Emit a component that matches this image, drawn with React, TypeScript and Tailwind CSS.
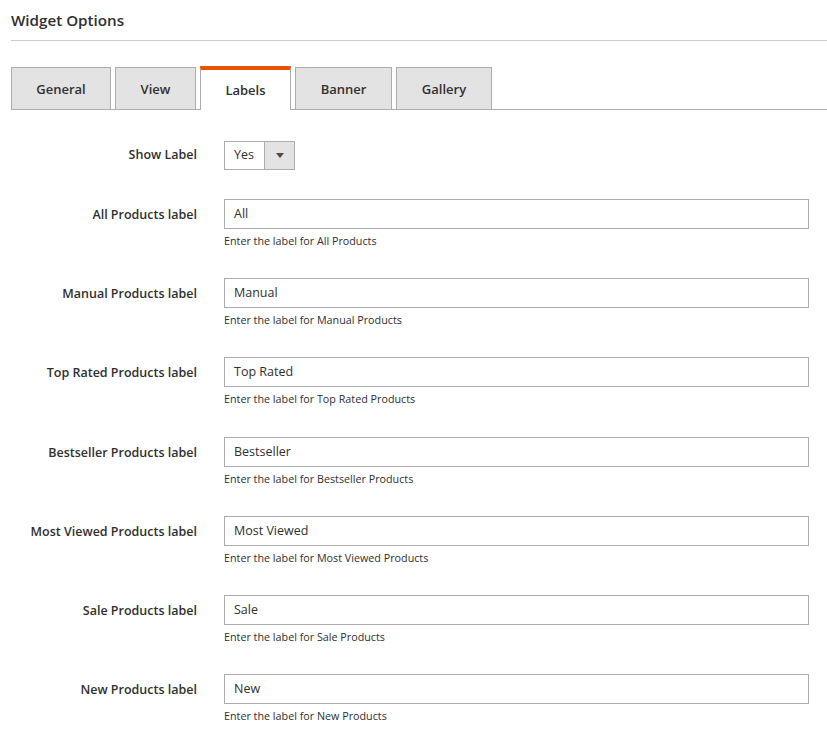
import React from 'react';

const font = { fontFamily: '"Open Sans", "Liberation Sans", sans-serif' };

const tabs = [
  { name: 'General', w: 'w-[100px]' },
  { name: 'View', w: 'w-[81px]' },
  { name: 'Labels', w: 'w-[91px]', active: true },
  { name: 'Banner', w: 'w-[97px]' },
  { name: 'Gallery', w: 'w-[96px]' },
];

const fields = [
  { label: 'All Products label', value: 'All', note: 'Enter the label for All Products' },
  { label: 'Manual Products label', value: 'Manual', note: 'Enter the label for Manual Products' },
  { label: 'Top Rated Products label', value: 'Top Rated', note: 'Enter the label for Top Rated Products' },
  { label: 'Bestseller Products label', value: 'Bestseller', note: 'Enter the label for Bestseller Products' },
  { label: 'Most Viewed Products label', value: 'Most Viewed', note: 'Enter the label for Most Viewed Products' },
  { label: 'Sale Products label', value: 'Sale', note: 'Enter the label for Sale Products' },
  { label: 'New Products label', value: 'New', note: 'Enter the label for New Products' },
];

const Tabs = () => (
  <div className="flex items-end gap-[4px] border-b border-[#adadad] mt-[25px]">
    {tabs.map((t) =>
      t.active ? (
        <div
          key={t.name}
          className={`${t.w} h-[44px] -mb-px pt-[1px] bg-white border-x border-[#adadad] border-t-[4px] border-t-[#eb5202] flex items-center justify-center text-[13px] font-semibold text-[#303030]`}
        >
          {t.name}
        </div>
      ) : (
        <div
          key={t.name}
          className={`${t.w} h-[42px] pt-[2px] bg-[#e3e3e3] border-x border-t border-[#adadad] flex items-center justify-center text-[13px] font-semibold text-[#303030]`}
        >
          {t.name}
        </div>
      ),
    )}
  </div>
);

export default function App() {
  return (
    <div className="min-h-screen bg-white pl-[11px] text-[#303030]" style={font}>
      <div className="pt-[10px] pb-[10px] border-b border-[#cccccc]">
        <h2 className="text-[15.2px] font-semibold leading-[20px]">Widget Options</h2>
      </div>
      <Tabs />

      <div className="pr-[18px]">
        <div className="flex items-center h-[30px] mt-[30px]">
          <div className="w-[186px] pt-[1px] text-right text-[12.5px] font-semibold">Show Label</div>
          <div className="ml-[27px] flex h-[29px] w-[71px] border border-[#adadad]">
            <div className="flex-1 pl-[9px] text-[12.5px] leading-[26px]">Yes</div>
            <div className="w-[30px] border-l border-[#adadad] bg-[#e3e3e3] flex items-center justify-center">
              <svg width="8" height="5" viewBox="0 0 8 5">
                <path d="M0 0 L8 0 L4 5 Z" fill="#514943" />
              </svg>
            </div>
          </div>
        </div>

        {fields.map((f, i) => (
          <div key={f.label} className={`flex items-start ${i === 0 ? 'mt-[29px]' : 'mt-[29.2px]'}`}>
            <div className="w-[186px] text-right text-[12.5px] font-semibold leading-[32px]">{f.label}</div>
            <div className="ml-[27px] flex-1">
              <div className="h-[30px] border border-[#adadad] pl-[9px] text-[12.5px] leading-[28px]">{f.value}</div>
              <div className="mt-[5px] text-[10.75px] leading-[15px]">{f.note}</div>
            </div>
          </div>
        ))}
      </div>
    </div>
  );
}
